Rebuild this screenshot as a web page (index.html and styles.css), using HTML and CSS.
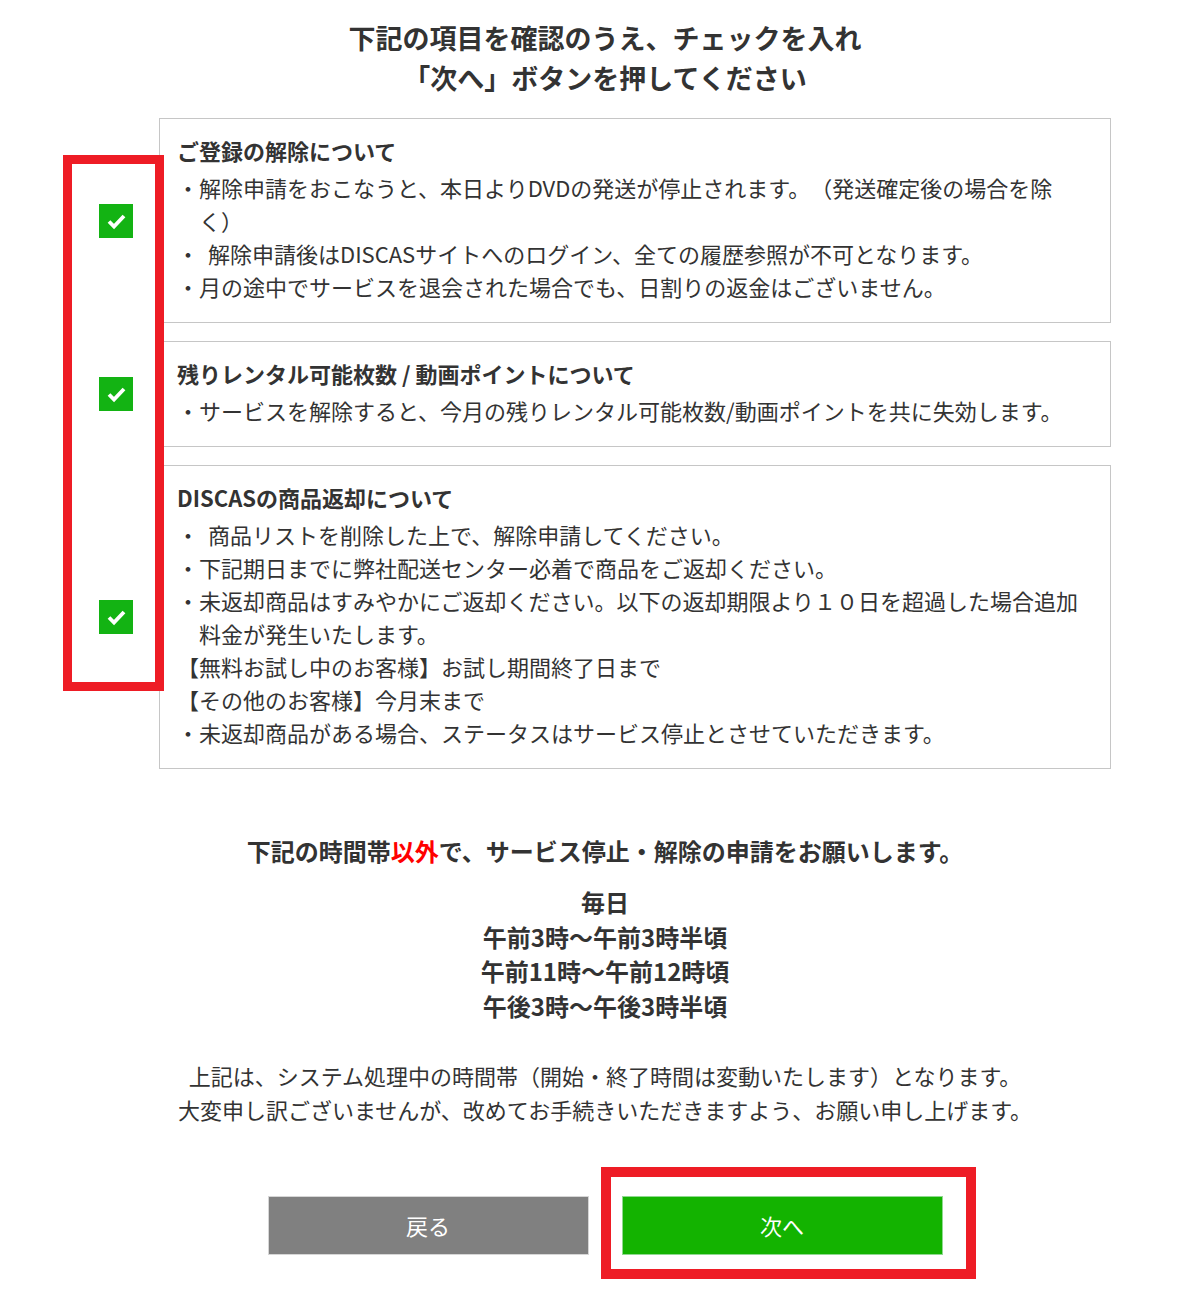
FILE: index.html
```html
<!DOCTYPE html>
<html lang="ja">
<head>
<meta charset="utf-8">
<title>解除の確認</title>
<link rel="stylesheet" href="styles.css">
</head>
<body>
<main class="page">
  <h1 class="title">下記の項目を確認のうえ、チェックを入れ<br>「次へ」ボタンを押してください</h1>

  <div class="items">
    <div class="item">
      <span class="check"><svg viewBox="0 0 34 34" width="34" height="34"><polyline points="10,17.5 15,22.5 25,12" fill="none" stroke="#fff" stroke-width="3.8"/></svg></span>
      <section class="box">
        <h2 class="box-title">ご登録の解除について</h2>
        <p class="li">・解除申請をおこなうと、本日よりDVDの発送が停止されます。（発送確定後の場合を除<br>く）</p>
        <p class="li">・<span class="gap"></span>解除申請後はDISCASサイトへのログイン、全ての履歴参照が不可となります。</p>
        <p class="li">・月の途中でサービスを退会された場合でも、日割りの返金はございません。</p>
      </section>
    </div>
    <div class="item">
      <span class="check"><svg viewBox="0 0 34 34" width="34" height="34"><polyline points="10,17.5 15,22.5 25,12" fill="none" stroke="#fff" stroke-width="3.8"/></svg></span>
      <section class="box">
        <h2 class="box-title">残りレンタル可能枚数 / 動画ポイントについて</h2>
        <p class="li">・サービスを解除すると、今月の残りレンタル可能枚数/動画ポイントを共に失効します。</p>
      </section>
    </div>
    <div class="item">
      <span class="check"><svg viewBox="0 0 34 34" width="34" height="34"><polyline points="10,17.5 15,22.5 25,12" fill="none" stroke="#fff" stroke-width="3.8"/></svg></span>
      <section class="box">
        <h2 class="box-title">DISCASの商品返却について</h2>
        <p class="li">・<span class="gap"></span>商品リストを削除した上で、解除申請してください。</p>
        <p class="li">・下記期日までに弊社配送センター必着で商品をご返却ください。</p>
        <p class="li">・未返却商品はすみやかにご返却ください。以下の返却期限より１０日を超過した場合追加<br>料金が発生いたします。</p>
        <p class="plain">【無料お試し中のお客様】お試し期間終了日まで</p>
        <p class="plain">【その他のお客様】今月末まで</p>
        <p class="li">・未返却商品がある場合、ステータスはサービス停止とさせていただきます。</p>
      </section>
    </div>
    <span class="mark mark-checks"></span>
  </div>

  <p class="notice">下記の時間帯<span class="red">以外</span>で、サービス停止・解除の申請をお願いします。</p>
  <p class="times">毎日<br>午前3時～午前3時半頃<br>午前11時～午前12時頃<br>午後3時～午後3時半頃</p>
  <p class="note">上記は、システム処理中の時間帯（開始・終了時間は変動いたします）となります。<br>大変申し訳ございませんが、改めてお手続きいただきますよう、お願い申し上げます。</p>

  <div class="buttons">
    <button class="btn btn-back" type="button">戻る</button>
    <div class="next-wrap">
      <button class="btn btn-next" type="button">次へ</button>
      <span class="mark mark-next"></span>
    </div>
  </div>
</main>
</body>
</html>
```

FILE: styles.css
```css
* { box-sizing: border-box; }

html, body {
  margin: 0;
  padding: 0;
  background: #fff;
}

body {
  font-family: "Noto Sans CJK JP", "Noto Sans", sans-serif;
  color: #333;
  font-size: 22px;
  text-spacing-trim: space-all;
}

.page {
  width: 1012px;
  margin-left: 99px;
  padding-bottom: 60px;
}

.title {
  margin: 18px 0 0;
  font-size: 27px;
  line-height: 40px;
  font-weight: bold;
  text-align: center;
  color: #333;
}

.items {
  position: relative;
  margin-top: 20px;
  display: flex;
  flex-direction: column;
  gap: 18px;
}

.item {
  display: flex;
  align-items: center;
  gap: 26px;
}

.check {
  flex: 0 0 34px;
  width: 34px;
  height: 34px;
  background: #13b313;
  display: block;
}

.check svg { display: block; }

.box {
  flex: 1;
  border: 1px solid #c6c6c6;
  padding: 15px 10px 19px 17px;
}

.box-title {
  margin: 0 0 4px;
  font-size: 22px;
  line-height: 33px;
  font-weight: bold;
}

.li, .plain {
  margin: 0;
  font-size: 22px;
  line-height: 33px;
  white-space: nowrap;
}

.li {
  padding-left: 1em;
  text-indent: -1em;
}

.gap {
  display: inline-block;
  width: 9px;
}

.mark {
  position: absolute;
  border: 9px solid #ee1c25;
  pointer-events: none;
}

.mark-checks {
  left: -36px;
  top: 37px;
  width: 101px;
  height: 536px;
}

.notice {
  margin: 64px 0 0;
  text-align: center;
  font-size: 24px;
  line-height: 35px;
  font-weight: bold;
}

.red { color: #f00; }

.times {
  margin: 17px 0 0;
  text-align: center;
  font-size: 24px;
  line-height: 34.7px;
  font-weight: bold;
}

.note {
  margin: 34px 0 0;
  text-align: center;
  font-size: 22px;
  line-height: 34px;
}

.buttons {
  margin-top: 70px;
  display: flex;
  justify-content: center;
  gap: 33px;
}

.btn {
  width: 321px;
  height: 59px;
  font-family: "Noto Sans CJK JP", "Noto Sans", sans-serif;
  font-size: 22px;
  color: #fff;
  border: 1px solid;
  padding: 0;
  cursor: pointer;
}

.btn-back {
  background: #808080;
  border-color: #d6d6d6;
}

.btn-next {
  background: #13b300;
  border-color: #8fd98f;
  display: block;
}

.next-wrap {
  position: relative;
}

.mark-next {
  border-width: 10px;
  left: -21px;
  top: -29px;
  width: 375px;
  height: 112px;
}
```
